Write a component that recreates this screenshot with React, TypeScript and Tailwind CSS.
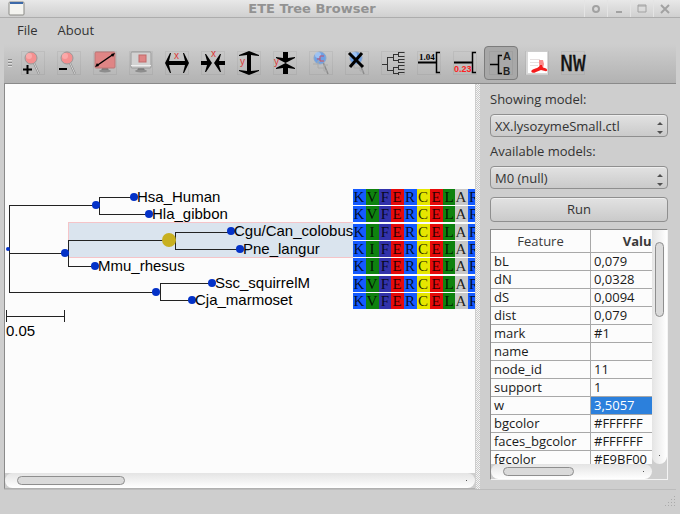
import type { ReactNode } from "react";

type Tool = { label: string; icon: ReactNode; active?: boolean };
type Leaf = { name: string; x: number; y: number; top: number; seq: string };

const leaves: Leaf[] = [
  { name: "Hsa_Human", x: 129, y: 113, top: 105, seq: "KVFERCELAR" },
  { name: "Hla_gibbon", x: 144, y: 130, top: 122, seq: "KVFERCELAR" },
  { name: "Cgu/Can_colobus", x: 226, y: 147, top: 140, seq: "KIFERCELAR" },
  { name: "Pne_langur", x: 235, y: 165, top: 157, seq: "KIFERCELAR" },
  { name: "Mmu_rhesus", x: 90, y: 182, top: 174, seq: "KIFERCELAR" },
  { name: "Ssc_squirrelM", x: 207, y: 199, top: 192, seq: "KVFERCELAR" },
  { name: "Cja_marmoset", x: 187, y: 216, top: 209, seq: "KVFERCELAR" },
];

const residueColors: Record<string, string> = {
  K: "#145aff",
  R: "#145aff",
  V: "#0f820f",
  I: "#0f820f",
  L: "#0f820f",
  F: "#3232aa",
  E: "#e60a0a",
  C: "#e6e600",
  A: "#c8c8c8",
};

const features: [string, string][] = [
  ["bL", "0,079"],
  ["dN", "0,0328"],
  ["dS", "0,0094"],
  ["dist", "0,079"],
  ["mark", "#1"],
  ["name", ""],
  ["node_id", "11"],
  ["support", "1"],
  ["w", "3,5057"],
  ["bgcolor", "#FFFFFF"],
  ["faces_bgcolor", "#FFFFFF"],
  ["fgcolor", "#E9BF00"],
];

function Icon({ children }: { children: ReactNode }) {
  return (
    <svg viewBox="0 0 24 24" className="size-6 overflow-visible outline-1 -outline-offset-1 outline-black/5" fill="none" aria-hidden="true">
      {children}
    </svg>
  );
}

function Lens({ sign }: { sign: string }) {
  return (
    <Icon>
      <path d="M13 12 L18 23" stroke="#8b8b8b" strokeWidth="2" />
      <path d="M13 12 L18 23" stroke="#d4d4d4" strokeWidth="1" />
      <circle cx="10" cy="7" r="6" fill="#f49090" stroke="#999" />
      <circle cx="8" cy="5" r="3" fill="#fbb" opacity=".6" />
      <path d={sign} stroke="#000" strokeWidth="2" />
    </Icon>
  );
}

function BlueLens({ crossed }: { crossed?: boolean }) {
  return (
    <Icon>
      <path d="M14 11 L19 23" stroke="#8b8b8b" strokeWidth="1.5" />
      <circle cx="11" cy="7" r="6" fill="#6da1e6" stroke="#8aa6cc" />
      <circle cx="9" cy="4" r="3" fill="#b2d0f8" opacity=".7" />
      <path d="M4 13h5v4h6M9 13v-3h6M15 17v-3h4M15 17v3h3" stroke="#aaa" strokeWidth="1" />
      {crossed ? (
        <path d="M4 2 L18 16 M17 2 L5 16" stroke="#000" strokeWidth="3" />
      ) : (
        <path d="M15 5h-4v5h4M8 8h3" stroke="#c0506c" />
      )}
    </Icon>
  );
}

function Screen({ fit }: { fit?: boolean }) {
  return (
    <Icon>
      <path d="M9 17h6l1 3H8z" fill="#777" />
      <ellipse cx="12" cy="20" rx="6" ry="1.5" fill="#8d8d8d" />
      <rect x="2" y="1" width="20" height="16" rx="1" fill={fit ? "#df8585" : "#d2d2d2"} stroke={fit ? "#bb7777" : "#999"} />
      {fit ? (
        <>
          <path d="M4 14.500 L20 3.500" stroke="#000" strokeWidth="1.500" />
          <path d="M2 16l2-4 2 3zM22 2l-4 1 2 3z" fill="#000" />
        </>
      ) : (
        <>
          <path d="M2 14.500h20" stroke="#eee" />
          <rect x="10" y="4" width="7" height="7" fill="#df8585" stroke="#c06a6a" />
        </>
      )}
    </Icon>
  );
}

function Axis({ x, y, name }: { x: number; y: number; name: string }) {
  return (
    <text x={x} y={y} fontSize="10" fill="#dc3838" className="font-['Liberation_Sans',Arial,sans-serif]">{name}</text>
  );
}

const tools: Tool[] = [
  { label: "Zoom in", icon: <Lens sign="M2 18.500h9M6.500 14v9" /> },
  { label: "Zoom out", icon: <Lens sign="M2 18h8" /> },
  { label: "Fit tree", icon: <Screen fit /> },
  { label: "Fit region", icon: <Screen /> },
  {
    label: "Expand X",
    icon: (
      <Icon>
        <path d="M0 12 5 2h1L4 10h16L18 2h1l5 10-5 10h-1l2-8H4l2 8H5z" fill="#000" />
        <Axis x={9} y={8} name="x" />
      </Icon>
    ),
  },
  {
    label: "Shrink X",
    icon: (
      <Icon>
        <path d="M0 10h6L4 3h1l6 9-6 9H4l2-7H0zM24 10h-6l2-7h-1l-6 9 6 9h1l-2-7h6z" fill="#000" />
        <Axis x={10} y={6} name="x" />
      </Icon>
    ),
  },
  {
    label: "Expand Y",
    icon: (
      <Icon>
        <path d="M12 0 22 4v1l-8-1v16l8-1v1l-10 4-10-4v-1l8 1V4L2 5V4z" fill="#000" />
        <Axis x={3} y={14} name="y" />
      </Icon>
    ),
  },
  {
    label: "Shrink Y",
    icon: (
      <Icon>
        <path d="M10 1h5v6l7-1v1l-9.500 5L3 7V6l7 1zM10 23h5v-6l7 1v-1l-9.500-5L3 17v1l7-1z" fill="#000" />
        <Axis x={1} y={14} name="y" />
      </Icon>
    ),
  },
  { label: "Find", icon: <BlueLens /> },
  { label: "Clear search", icon: <BlueLens crossed /> },
  {
    label: "Topology",
    icon: (
      <Icon>
        <path d="M1 13.500h5M6.500 6v14M6.500 6.500h6M6.500 19.500h6M12.500 3v7M12.500 16v7M12.500 3.500h5M12.500 9.500h5M12.500 16.500h5M12.500 22.500h5M17.500 1v5M17.500 8v4M17.500 14v5M17.500 21v3M17.500 1.500h6M17.500 5.500h6M17.500 8.500h6M17.500 11.500h6M17.500 14.500h6M17.500 18.500h6M17.500 21.500h6" stroke="#333" />
      </Icon>
    ),
  },
  {
    label: "Show branch length",
    icon: (
      <Icon>
        <path d="M1 11.500h18" stroke="#000" strokeWidth="2" />
        <path d="M23 1.500h-3.500v20H23" stroke="#000" strokeWidth="1.500" />
        <text x="2" y="9" fontSize="9" fontWeight="bold" fill="#000" className="font-['Liberation_Serif',serif]">1.04</text>
      </Icon>
    ),
  },
  {
    label: "Show support",
    icon: (
      <Icon>
        <path d="M1 11.500h18" stroke="#000" strokeWidth="2" />
        <path d="M23 1.500h-3.500v20H23" stroke="#000" strokeWidth="1.500" />
        <text x="1" y="21" fontSize="9" fontWeight="bold" fill="#f22" className="font-['Liberation_Sans',sans-serif]">0.23</text>
      </Icon>
    ),
  },
  {
    label: "Show leaf names",
    active: true,
    icon: (
      <Icon>
        <path d="M1 13.500h8M13 4.500H9.500v18H13" stroke="#000" strokeWidth="1.500" />
        <text x="14" y="9" fontSize="11" fontWeight="bold" fill="#222" className="font-['Liberation_Sans',sans-serif]">A</text>
        <text x="14" y="24" fontSize="10" fontWeight="bold" fill="#222" className="font-['Liberation_Sans',sans-serif]">B</text>
      </Icon>
    ),
  },
  {
    label: "Export PDF",
    icon: (
      <Icon>
        <rect x="1" y="0" width="22" height="24" fill="#d8d8d8" />
        <rect x="3" y="1" width="19" height="21" fill="#fff" />
        <path d="M5 8.500h10M5 11.500h9M5 14.500h8" stroke="#e6e0e0" />
        <path d="M14 9h4l1 4-1 4h-3l-1-4z" fill="#fa8d8d" />
        <path d="M15 14c-1 3-4 3-8 5-2 2 1 4 4 2l5-2 4 1c3 1 3-2 0-3-2 0-3-1-3-3z" fill="#f41c1c" />
      </Icon>
    ),
  },
  {
    label: "Newick",
    icon: (
      <Icon>
        <text x="12" y="20" fontSize="21" textAnchor="middle" fill="#111" stroke="#111" strokeWidth=".3" className="font-['DejaVu_Sans_Mono',monospace]">NW</text>
      </Icon>
    ),
  },
];

function TreeCanvas() {
  return (
    <svg width="476" height="300" className="block font-['Liberation_Sans',Arial,sans-serif]" role="img" aria-label="Phylogenetic tree">
      <rect x="63" y="138" width="420" height="36" fill="#f5c4c8" />
      <rect x="64" y="139" width="420" height="34" fill="#dae4ee" />
      <g stroke="#222" fill="none" shapeRendering="crispEdges">
        <path d="M4 121V208M4 121H91M94 113V130M94 113H127M94 130H143" />
        <path d="M4 169H60M63 156V182M63 156H160M63 182H88M170 148V165M170 148H225M170 165H234" />
        <path d="M4 208H152M155 199V216M155 199H206M155 216H186" />
        <path d="M1 232H59M1 226V238M59 226V238" />
      </g>
      <g fill="#0432c8">
        <circle cx="3" cy="165" r="2" />
        <circle cx="91" cy="121" r="4" />
        <circle cx="60" cy="169" r="4" />
        <circle cx="151" cy="208" r="4" />
        {leaves.map((leaf) => (
          <circle key={leaf.name} cx={leaf.x} cy={leaf.y} r="4" />
        ))}
      </g>
      <circle cx="164" cy="156" r="7" fill="#c8b020" />
      <rect x="348" y="138" width="128" height="36" fill="#fcfcfc" />
      <text x="1" y="252" fontSize="15">0.05</text>
      {leaves.map((leaf) => (
        <g key={leaf.name}>
          <text x={leaf.x + 3} y={leaf.y + 5} fontSize="15">{leaf.name}</text>
          <g className="font-['Liberation_Serif','Times_New_Roman',serif]" fontSize="15" textAnchor="middle">
            {leaf.seq.split("").map((residue, i) => {
              const left = 348 + Math.round((i * 64) / 5);
              return (
                <g key={i}>
                  <rect x={left} y={leaf.top} width="13" height="16" fill={residueColors[residue]} />
                  <text x={left + 6} y={leaf.top + 13} fill="#000" fillOpacity=".85">{residue}</text>
                </g>
              );
            })}
          </g>
        </g>
      ))}
    </svg>
  );
}

function ModelSelect({ id, label, value }: { id: string; label: string; value: string }) {
  return (
    <div>
      <label htmlFor={id} className="block leading-[30px]">{label}</label>
      <div className="relative">
        <select id={id} className="block h-[23px] w-full appearance-none rounded-sm border border-[#8f8f8f] bg-linear-to-b from-[#e2e2e2] to-[#cacaca] px-1 leading-5 shadow-[inset_0_1px_0_#eee]">
          <option>{value}</option>
        </select>
        <svg viewBox="0 0 6 12" className="pointer-events-none absolute top-2 right-1 h-3 w-2" fill="#505050" aria-hidden="true">
          <path d="M0 3l3-3 3 3zM0 9l3 3 3-3z" />
        </svg>
      </div>
    </div>
  );
}

const windowButtons: [string, ReactNode][] = [
  ["Keep above", <circle key="o" cx="6" cy="6" r="3" strokeWidth="2" />],
  ["Minimize", <path key="m" d="M3 9h6" strokeWidth="2" />],
  ["Maximize", <path key="x" d="M2 2h8v7H2zM2 3h8" />],
  ["Close", <path key="c" d="M2 2l8 8M10 2l-8 8" strokeWidth="2" />],
];

export default function App() {
  return (
    <div className="flex h-screen flex-col overflow-hidden bg-[#cecece] font-['Open_Sans','Noto_Sans',sans-serif] text-[13px] text-[#333]">
      <header className="flex h-[18px] shrink-0 items-center border-b border-[#adadad] bg-linear-to-b from-[#e8e8e8] to-[#d0d0d0]">
        <div className="flex w-16 pl-2">
          <svg viewBox="0 0 18 15" className="h-[15px] w-[18px]" aria-hidden="true">
            <rect x="1" y="1" width="15" height="13" rx="1" fill="#f4f4f0" stroke="#8a8a86" />
            <path d="M2 2h13" stroke="#3c69a8" strokeWidth="2" />
          </svg>
        </div>
        <h1 className="flex-1 pt-px pr-6 text-center font-['DejaVu_Sans',Verdana,sans-serif] text-[13px] leading-4 font-bold text-[#929292]">ETE Tree Browser</h1>
        <div className="flex h-full pr-1">
          {windowButtons.map(([label, shape]) => (
            <button key={label} aria-label={label} className="flex w-[23px] items-center justify-center border-l border-[#e4e4e4]">
              <svg viewBox="0 0 12 12" className="size-3" fill="none" stroke="#a2a2a2" aria-hidden="true">{shape}</svg>
            </button>
          ))}
        </div>
      </header>

      <nav className="flex h-[26px] shrink-0 items-center gap-5 px-[17px]">
        <button>File</button>
        <button>About</button>
      </nav>

      <div className="mx-1 flex h-10 shrink-0 items-center border-b border-[#8a8a8a] bg-linear-to-b from-[#cecece] to-[#b2b2b2] pb-0.5" role="toolbar" aria-label="Tree tools">
        <div className="mx-1 h-2 w-1 bg-[repeating-linear-gradient(#8a8a8a_0_1px,#ddd_1px_2px,transparent_2px_3px)]" />
        <div className="flex gap-0.5">
          {tools.map((tool) => (
            <button
              key={tool.label}
              aria-label={tool.label}
              aria-pressed={tool.active}
              className={
                tool.active
                  ? "flex size-[34px] items-center justify-center rounded-sm border border-[#7c7c7c] bg-[#a8a8a8]"
                  : "flex size-[34px] items-center justify-center"
              }
            >
              {tool.icon}
            </button>
          ))}
        </div>
      </div>

      <main className="flex min-h-0 flex-1 pl-1">
        <section className="flex min-w-0 flex-1 flex-col border-b border-l border-b-[#b0b0b0] border-l-[#8a8a8a] bg-[#fcfcfc]">
          <div className="min-h-0 flex-1 overflow-hidden">
            <TreeCanvas />
          </div>
          <div className="bg-[#cecece]">
            <div className="flex h-[15px] items-center justify-between rounded-lg bg-linear-to-b from-[#e4e4e4] to-white px-3">
              <div className="h-[9px] w-[108px] rounded-full border border-[#8e8e8e] bg-[#dadada]" />
              <div className="-mr-1 size-px bg-[#555]" />
            </div>
          </div>
        </section>

        <div className="mx-px w-1 bg-[repeating-conic-gradient(#f4f4f4_0_25%,#cacaca_0_50%)] bg-size-[2px_2px]" />

        <aside className="flex w-[199px] shrink-0 flex-col pr-3 pb-[9px] pl-[9px]">
          <ModelSelect id="showing" label="Showing model:" value="XX.lysozymeSmall.ctl" />
          <div className="-mt-px">
            <ModelSelect id="available" label="Available models:" value="M0 (null)" />
          </div>
          <button className="mt-2 h-[25px] shrink-0 rounded-sm border border-[#8f8f8f] bg-linear-to-b from-[#e2e2e2] to-[#cacaca] shadow-[inset_0_1px_0_#eee]">Run</button>

          <div className="mt-[7px] flex min-h-0 flex-1 flex-col border border-t-[#8a8a8a] border-r-[#f4f4f4] border-b-[#f4f4f4] border-l-[#8a8a8a]">
            <div className="flex min-h-0 flex-1">
              <div className="min-w-0 flex-1 overflow-hidden bg-[#fcfcfc]">
                <table className="w-[200px] table-fixed border-separate border-spacing-0 text-[#1a1a1a]">
                  <thead>
                    <tr className="h-[23px] leading-5 text-[#3a3a3a]">
                      <th scope="col" className="border-r border-b border-[#a8a8a8] p-0 font-normal">Feature</th>
                      <th scope="col" className="border-b border-[#a8a8a8] p-0 font-bold">Value</th>
                    </tr>
                  </thead>
                  <tbody>
                    {features.map(([name, value]) => (
                      <tr key={name} className="h-[18px] leading-[17px]">
                        <td className="border-r border-b border-[#a8a8a8] py-0 pr-0 pl-[3px]">{name}</td>
                        <td className={name === "w" ? "border-b border-[#a8a8a8] bg-[#2c80dc] py-0 pr-0 pl-[3px] text-white" : "border-b border-[#a8a8a8] py-0 pr-0 pl-[3px]"}>{value}</td>
                      </tr>
                    ))}
                  </tbody>
                </table>
              </div>
              <div className="w-[15px] bg-[#cecece]">
                <div className="flex h-full flex-col items-center justify-between rounded-b-lg bg-linear-to-r from-[#e4e4e4] to-white pt-3 pb-2">
                  <div className="h-[75px] w-[9px] rounded-full border border-[#8e8e8e] bg-[#dadada]" />
                  <div className="size-px bg-[#555]" />
                </div>
              </div>
            </div>
            <div className="bg-[#cecece] pr-[15px]">
              <div className="flex h-[15px] items-center justify-between rounded-lg bg-linear-to-b from-[#e4e4e4] to-white pr-2 pl-3">
                <div className="h-[9px] w-[71px] rounded-full border border-[#8e8e8e] bg-[#dadada]" />
                <div className="size-px bg-[#555]" />
              </div>
            </div>
          </div>
        </aside>
      </main>

      <footer className="mx-1 flex h-[25px] shrink-0 items-center justify-end border-t border-[#bcbcbc]">
        <svg viewBox="0 0 12 12" className="size-3" fill="#aaa" aria-hidden="true">
          <path d="M10 0h1v1h-1zM7 3h1v1H7zM10 3h1v1h-1zM4 6h1v1H4zM7 6h1v1H7zM10 6h1v1h-1zM1 9h1v1H1zM4 9h1v1H4zM7 9h1v1H7zM10 9h1v1h-1z" />
        </svg>
      </footer>
    </div>
  );
}
